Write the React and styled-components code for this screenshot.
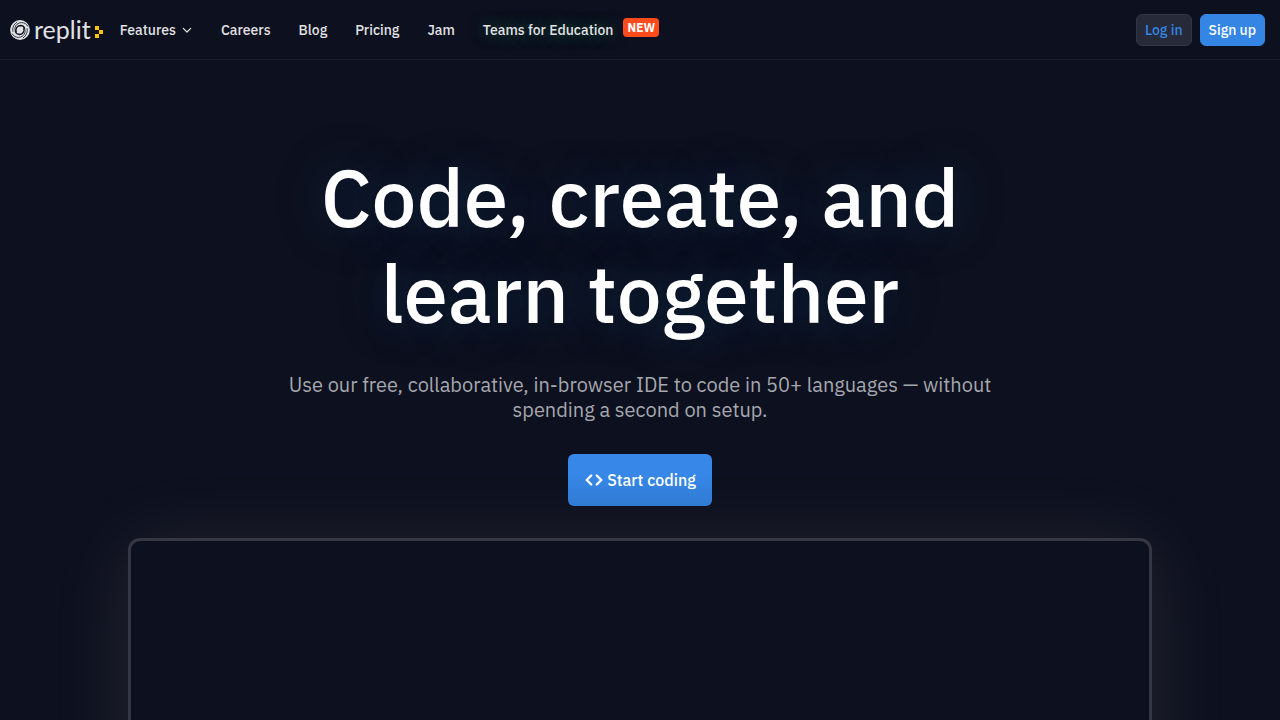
import React from "react";
import styled, { createGlobalStyle, css } from "styled-components";

const GlobalStyle = createGlobalStyle`
  * { box-sizing: border-box; }
  body {
    margin: 0;
    background: #0d101e;
    color: #e1e2e4;
    font-family: "IBM Plex Sans", "Noto Sans", sans-serif;
    font-size: 14px;
  }
`;

const Page = styled.div`
  min-height: 100vh;
  overflow: hidden;
`;

const Header = styled.header`
  display: flex;
  align-items: center;
  justify-content: space-between;
  height: 60px;
  padding: 0 15px 0 10px;
  border-bottom: 1px solid #1c1f2c;
`;

const Nav = styled.nav`
  display: flex;
  align-items: center;
`;

const Logo = styled.a`
  display: flex;
  align-items: center;
  gap: 4px;
  margin-right: 17px;
  color: #e1e2e4;
  text-decoration: none;
`;

const Wordmark = styled.span`
  padding-bottom: 2px;
  font-family: Lato, sans-serif;
  font-size: 25px;
  line-height: 28px;
`;

const PromptMark = styled.svg`
  margin-top: 4px;
`;

const NavList = styled.ul`
  display: flex;
  align-items: center;
  gap: 28px;
  margin: 0;
  padding: 0;
  list-style: none;
`;

const navText = css`
  color: #e1e2e4;
  font: inherit;
  font-weight: 500;
  line-height: 20px;
  white-space: nowrap;
`;

const NavLink = styled.a`
  ${navText}
  display: flex;
  align-items: center;
  gap: 10px;
  text-decoration: none;
  text-shadow: ${(p) => (p.$glow ? "0 0 16px rgba(20, 130, 90, 0.8)" : "none")};
`;

const NavButton = styled.button`
  ${navText}
  display: flex;
  align-items: center;
  gap: 5px;
  padding: 0;
  border: 0;
  background: none;
`;

const Badge = styled.span`
  margin-bottom: 4px;
  padding: 1px 4px 0;
  border-radius: 4px;
  background: #ff4a1c;
  color: #fff;
  font-size: 12px;
  font-weight: 700;
  line-height: 18px;
  text-shadow: none;
`;

const Actions = styled.div`
  display: flex;
  gap: 8px;
`;

const Action = styled.button`
  height: 32px;
  padding: 0 8px;
  border: 1px solid ${(p) => (p.$primary ? "#3485e4" : "#323644")};
  border-radius: 6px;
  background: ${(p) => (p.$primary ? "#3485e4" : "#262a39")};
  color: ${(p) => (p.$primary ? "#fff" : "#3485e4")};
  font: inherit;
  font-weight: 500;
  white-space: nowrap;
`;

const Hero = styled.main`
  display: flex;
  flex-direction: column;
  align-items: center;
  padding: 89px 16px 0;
  text-align: center;
`;

const Title = styled.h1`
  max-width: 720px;
  margin: 0;
  color: #fff;
  font-size: 80px;
  font-weight: 500;
  line-height: 96px;
  text-shadow: 0 0 48px rgba(0, 90, 150, 0.36);
`;

const Subtitle = styled.p`
  max-width: 720px;
  margin: 31px 0 0;
  color: #a5a7ae;
  font-size: 20px;
  line-height: 25px;
`;

const StartButton = styled.button`
  display: flex;
  align-items: center;
  justify-content: center;
  gap: 3px;
  height: 52px;
  margin-top: 32px;
  padding: 0 16px;
  border: 0;
  border-radius: 6px;
  background: linear-gradient(#3687e7 40%, #307bd3);
  color: #fff;
  font: inherit;
  font-size: 16px;
  font-weight: 500;
`;

const Preview = styled.section`
  width: 80%;
  height: 576px;
  margin: 32px auto 0;
  border: 3px solid #353742;
  border-radius: 12px;
  background: #0d101e;
  box-shadow: 0 8px 80px rgba(255, 240, 220, 0.1);
`;

function LogoMark() {
  return (
    <svg width="20" height="22" viewBox="0 0 20 22" aria-hidden="true">
      <circle cx="10" cy="11" r="9.9" fill="#e1e2e4" />
      <g fill="none" stroke="#0d101e" strokeLinecap="round">
        <path strokeWidth="1.3" d="M6.2 12.8C5.2 9.8 7 6.6 10.4 6.5C12.6 6.5 14 7.6 14.5 9.1M13.8 9.2C14.8 12.2 13 15.4 9.6 15.5C7.4 15.5 6 14.4 5.5 12.9" />
        <path strokeWidth="0.8" d="M5.5 12.9C3.6 8.4 6 4 11.6 3.6C14.4 3.6 16.6 5 17.8 7.2M14.5 9.1C16.4 13.6 14 18 8.4 18.4C5.6 18.4 3.4 17 2.2 14.8" />
        <path strokeWidth="0.8" d="M2.9 12.5C2.2 8.6 3.8 5.2 6.8 3.2M17.1 9.5C17.8 13.4 16.2 16.8 13.2 18.8" />
      </g>
    </svg>
  );
}

function Prompt() {
  return (
    <PromptMark width="8" height="12" viewBox="0 0 8 12" fill="#fdc708" aria-hidden="true">
      <path d="M0 0H4V4H8V8H4V12H0V8H4V4H0Z" />
    </PromptMark>
  );
}

export default function App() {
  return (
    <Page>
      <GlobalStyle />
      <Header>
        <Nav aria-label="Main">
          <Logo href="#" aria-label="replit home">
            <LogoMark />
            <Wordmark>replit</Wordmark>
            <Prompt />
          </Logo>
          <NavList>
            <li>
              <NavButton type="button">
                Features
                <svg width="12" height="12" viewBox="0 0 12 12" fill="none" stroke="currentColor" strokeWidth="1.2" strokeLinecap="round" strokeLinejoin="round" aria-hidden="true">
                  <path d="M2.3 4.3L6 8L9.7 4.3" />
                </svg>
              </NavButton>
            </li>
            {["Careers", "Blog", "Pricing", "Jam"].map((label) => (
              <li key={label}>
                <NavLink href="#">{label}</NavLink>
              </li>
            ))}
            <li>
              <NavLink href="#" $glow>
                Teams for Education
                <Badge>NEW</Badge>
              </NavLink>
            </li>
          </NavList>
        </Nav>
        <Actions>
          <Action type="button">Log in</Action>
          <Action type="button" $primary>Sign up</Action>
        </Actions>
      </Header>
      <Hero>
        <Title>Code, create, and learn together</Title>
        <Subtitle>
          Use our free, collaborative, in-browser IDE to code in 50+ languages — without spending a second on setup.
        </Subtitle>
        <StartButton type="button">
          <svg width="20" height="16" viewBox="0 0 20 16" fill="none" stroke="currentColor" strokeWidth="2.4" strokeLinecap="round" strokeLinejoin="round" aria-hidden="true">
            <path d="M7.2 3.5L2.7 8L7.2 12.5M12.8 3.5L17.3 8L12.8 12.5" />
          </svg>
          Start coding
        </StartButton>
      </Hero>
      <Preview aria-label="Editor preview" />
    </Page>
  );
}
